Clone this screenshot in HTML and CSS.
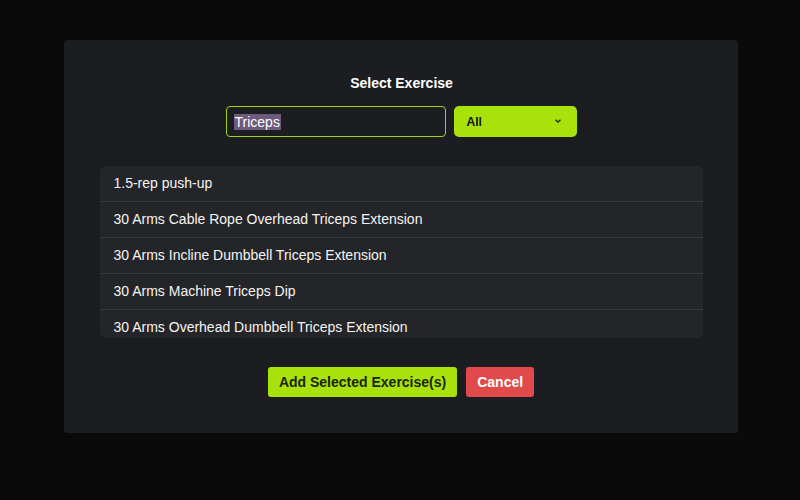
FILE: index.html
```html
<!DOCTYPE html>
<html>
<head>
<meta charset="utf-8">
<link rel="stylesheet" href="styles.css">
</head>
<body>
<div class="overlay">
  <div class="modal">
    <h2 class="title">Select Exercise</h2>
    <div class="filters">
      <div class="search"><span class="sel">Triceps</span></div>
      <div class="dropdown"><span>All</span><svg width="8" height="6" viewBox="0 0 8 6"><path d="M1.5 1.8 L4 4.2 L6.5 1.8" fill="none" stroke="#1a1a1a" stroke-width="1.3"/></svg></div>
    </div>
    <div class="list">
      <div class="row">1.5-rep push-up</div>
      <div class="row">30 Arms Cable Rope Overhead Triceps Extension</div>
      <div class="row">30 Arms Incline Dumbbell Triceps Extension</div>
      <div class="row">30 Arms Machine Triceps Dip</div>
      <div class="row">30 Arms Overhead Dumbbell Triceps Extension</div>
    </div>
    <div class="actions">
      <button class="btn add">Add Selected Exercise(s)</button>
      <button class="btn cancel">Cancel</button>
    </div>
  </div>
</div>
</body>
</html>
```
FILE: styles.css
```css
html, body { margin: 0; padding: 0; }
body {
  width: 800px; height: 500px;
  background: #0a0a0b;
  font-family: "Liberation Sans", Arial, sans-serif;
  color: #f2f2f2;
  overflow: hidden;
}
.overlay {
  display: flex;
  justify-content: center;
  padding-top: 40px;
  padding-left: 2px;
}
.modal {
  width: 674px;
  height: 393px;
  box-sizing: border-box;
  background: #1c1d20;
  border-radius: 4px;
  display: flex;
  flex-direction: column;
  align-items: center;
  padding-top: 35px;
}
.title {
  margin: 0;
  font-size: 14px;
  font-weight: bold;
  color: #fff;
  line-height: 16px;
  padding-left: 1px;
}
.filters {
  display: flex;
  gap: 8px;
  margin-top: 15px;
}
.search {
  width: 220px; height: 31px;
  box-sizing: border-box;
  border: 1px solid #a2d31a;
  border-radius: 4px;
  background: #1c1d20;
  display: flex;
  align-items: center;
  padding-left: 7px;
  font-size: 14px;
}
.sel {
  background: #6d5a7c;
  color: #fff;
  line-height: 16px;
  padding: 0 1px;
}
.dropdown {
  width: 123px; height: 31px;
  box-sizing: border-box;
  background: #a8e20a;
  border-radius: 5px;
  display: flex;
  align-items: center;
  justify-content: space-between;
  padding: 0 15px 0 13px;
  color: #111;
  font-size: 12px;
  font-weight: bold;
}
.dropdown svg { margin-top: -2px; }
.list {
  margin-top: 29px;
  width: 603px;
  height: 172px;
  background: #242528;
  border-radius: 6px;
  overflow: hidden;
}
.row {
  height: 36px;
  box-sizing: border-box;
  border-bottom: 1px solid #38393c;
  display: flex;
  align-items: center;
  padding-left: 14px;
  padding-bottom: 2px;
  font-size: 14px;
  color: #f4f4f4;
}
.actions {
  display: flex;
  gap: 9px;
  margin-top: 29px;
}
.btn {
  height: 30px;
  border: none;
  border-radius: 3px;
  font-family: "Liberation Sans", Arial, sans-serif;
  font-size: 14px;
  font-weight: bold;
  padding: 0 11px;
  white-space: nowrap;
  line-height: 30px;
}
.add { background: #a8e20a; color: #1b2410; }
.cancel { background: #e04a4b; color: #fff; }
```
